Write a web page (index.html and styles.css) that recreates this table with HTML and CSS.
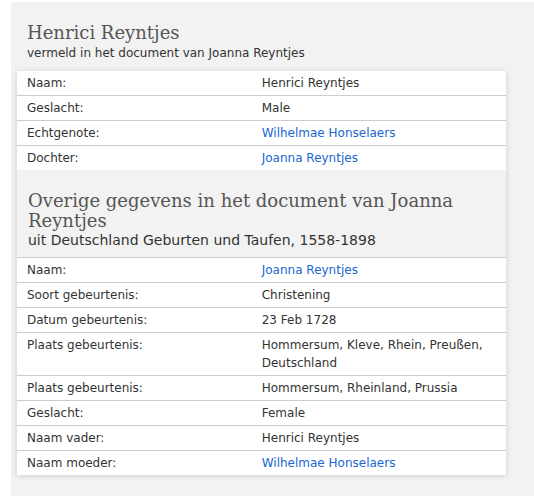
FILE: index.html
```html
<!DOCTYPE html>
<html>
<head>
<meta charset="utf-8">
<link rel="stylesheet" href="styles.css">
</head>
<body>
<div class="panel">
  <div class="head">
    <h2 class="title">Henrici Reyntjes</h2>
    <div class="sub">vermeld in het document van Joanna Reyntjes</div>
  </div>
  <div class="card">
    <div class="row"><div class="lbl">Naam:</div><div class="val">Henrici Reyntjes</div></div>
    <div class="row"><div class="lbl">Geslacht:</div><div class="val">Male</div></div>
    <div class="row"><div class="lbl">Echtgenote:</div><div class="val"><a href="#">Wilhelmae Honselaers</a></div></div>
    <div class="row last"><div class="lbl">Dochter:</div><div class="val"><a href="#">Joanna Reyntjes</a></div></div>
    <div class="section">
      <h2 class="title">Overige gegevens in het document van Joanna Reyntjes</h2>
      <div class="sub2">uit Deutschland Geburten und Taufen, 1558-1898</div>
    </div>
    <div class="row"><div class="lbl">Naam:</div><div class="val"><a href="#">Joanna Reyntjes</a></div></div>
    <div class="row"><div class="lbl">Soort gebeurtenis:</div><div class="val">Christening</div></div>
    <div class="row"><div class="lbl">Datum gebeurtenis:</div><div class="val">23 Feb 1728</div></div>
    <div class="row"><div class="lbl">Plaats gebeurtenis:</div><div class="val">Hommersum, Kleve, Rhein, Preußen, Deutschland</div></div>
    <div class="row"><div class="lbl">Plaats gebeurtenis:</div><div class="val">Hommersum, Rheinland, Prussia</div></div>
    <div class="row"><div class="lbl">Geslacht:</div><div class="val">Female</div></div>
    <div class="row"><div class="lbl">Naam vader:</div><div class="val">Henrici Reyntjes</div></div>
    <div class="row last"><div class="lbl">Naam moeder:</div><div class="val"><a href="#">Wilhelmae Honselaers</a></div></div>
  </div>
</div>
</body>
</html>
```
FILE: styles.css
```css
html, body {
  margin: 0;
  padding: 0;
  background: #ffffff;
}
body {
  font-family: "DejaVu Sans", Verdana, sans-serif;
  font-size: 12px;
  color: #333333;
}
.panel {
  margin: 2px 0 2px 11px;
  background: #f2f2f2;
  padding: 19px 28px 21px 6px;
}
.head {
  padding: 0 10px 10px 10px;
}
.title {
  margin: 0;
  font-family: "DejaVu Serif", "Liberation Serif", serif;
  font-weight: normal;
  font-size: 18px;
  line-height: 20px;
  color: #555555;
}
.head .title {
  line-height: 24px;
}
.sub {
  font-size: 12px;
  line-height: 16px;
  color: #333333;
}
.card {
  background: #ffffff;
  box-shadow: 0 1px 6px rgba(0, 0, 0, 0.15);
}
.row {
  display: grid;
  grid-template-columns: 48% 52%;
  border-bottom: 1px solid #cccccc;
  line-height: 18px;
  padding: 3px 0;
}
.row.last {
  border-bottom: none;
}
.lbl, .val {
  padding: 0 10px;
}
.val a {
  color: #1a66d2;
  text-decoration: none;
}
.section {
  background: #f2f2f2;
  padding: 21px 10px 8px 11px;
  border-bottom: 1px solid #cccccc;
}
.sub2 {
  font-size: 14px;
  line-height: 18px;
  color: #333333;
}
```
